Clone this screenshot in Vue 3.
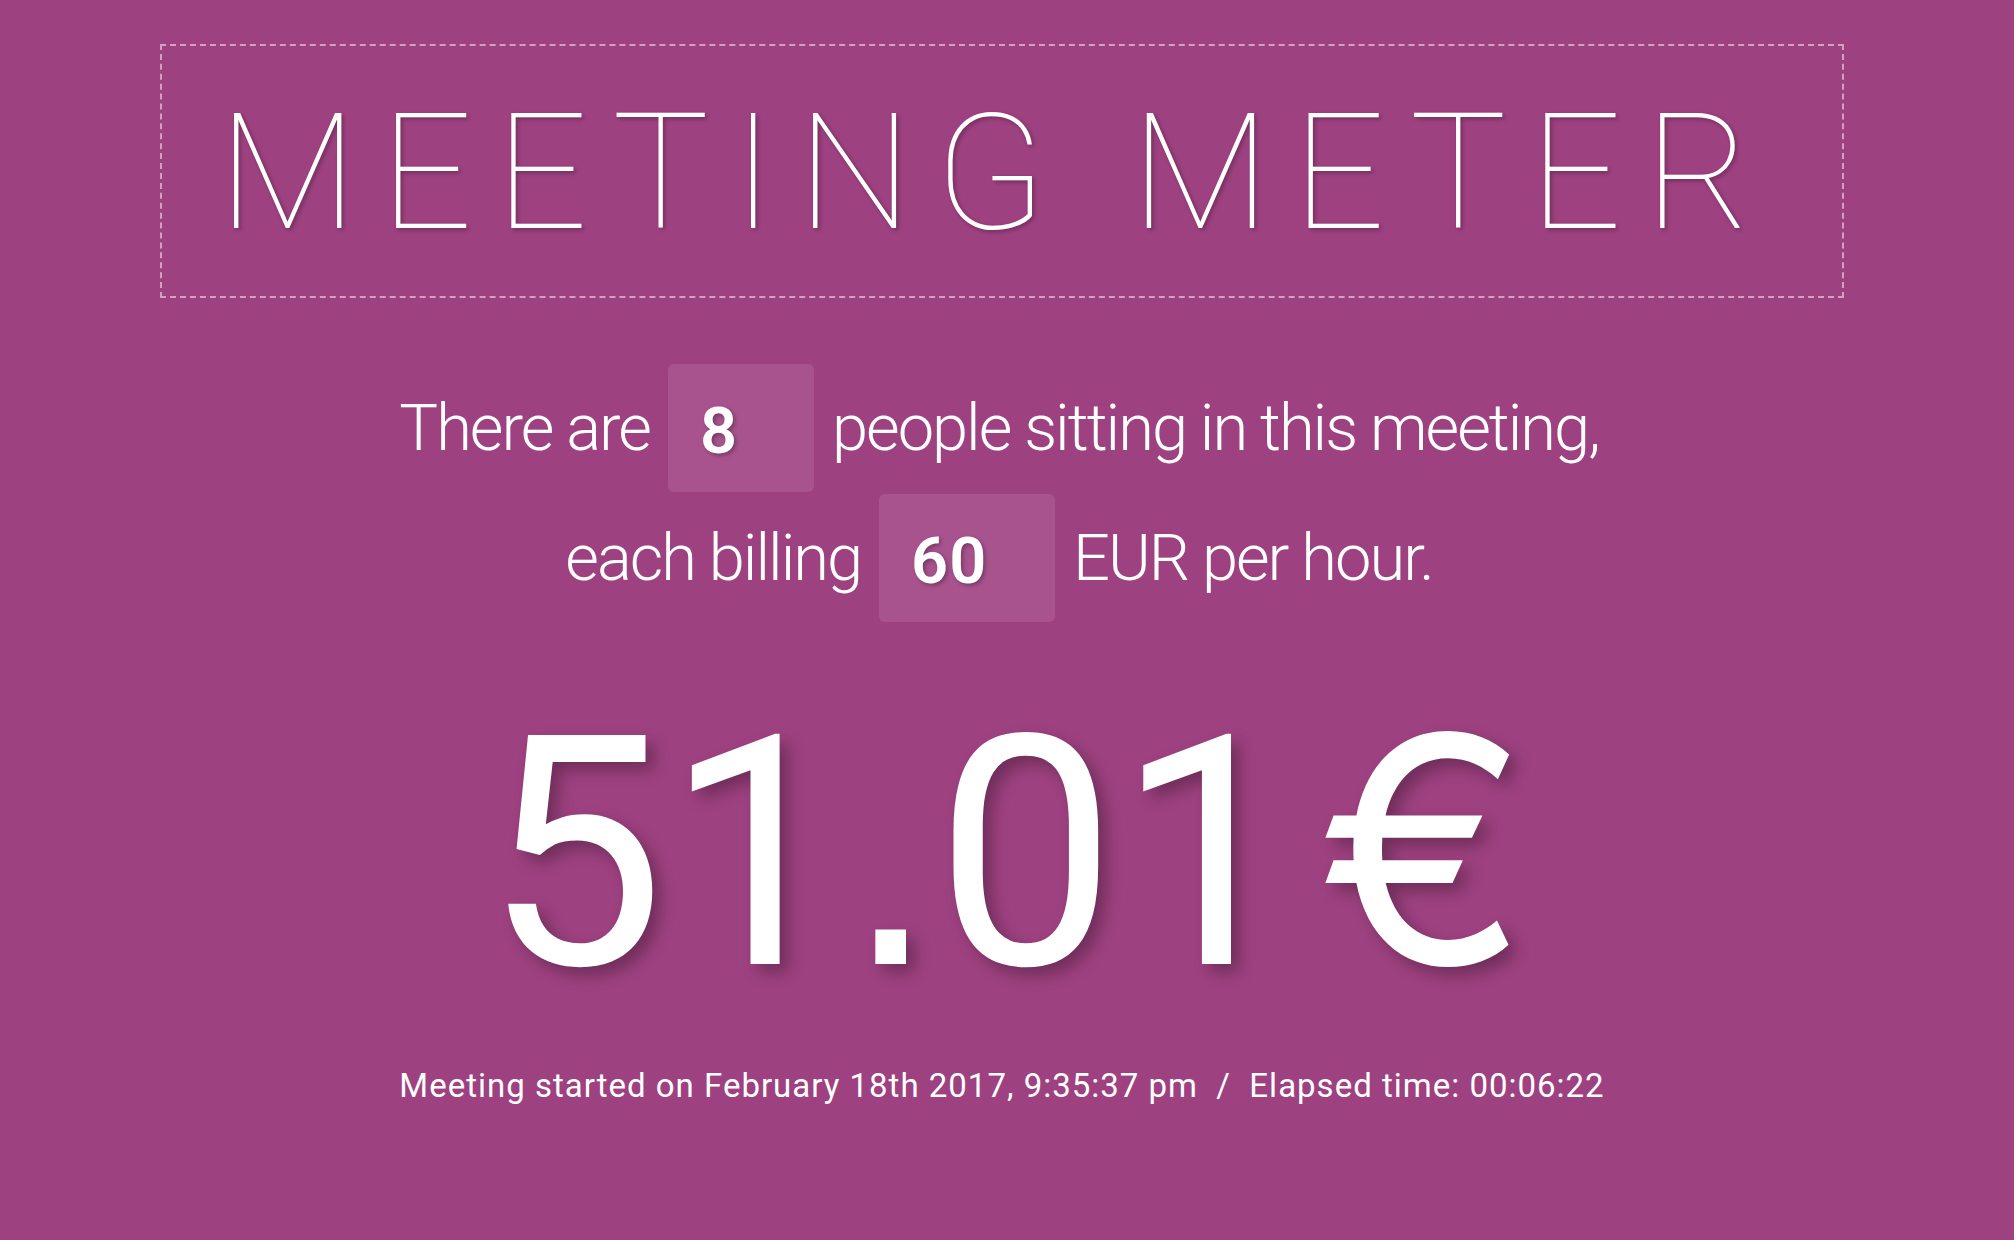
<script setup>
import { ref } from 'vue'

const people = ref('8')
const rate = ref('60')
</script>

<template>
  <main class="page">
    <header class="banner"><h1>MEETING METER</h1></header>
    <form class="setup" @submit.prevent>
      <p><label for="people">There are</label> <input id="people" v-model="people" class="people" inputmode="numeric"> people sitting in this meeting,</p>
      <p><label for="rate">each billing</label> <input id="rate" v-model="rate" class="rate" inputmode="numeric"> EUR per hour.</p>
    </form>
    <p class="total">51<span class="point">.</span>01<span class="currency">€</span></p>
    <p class="status">Meeting started on February 18th 2017, 9:35:37 pm&nbsp; /&nbsp; Elapsed time: 00:06:22</p>
  </main>
</template>

<style>
body {
  background: #9e4180;
}
</style>

<style scoped>
.page {
  box-sizing: border-box;
  min-height: 100vh;
  padding: 44px 170px 0 160px;
  background: #9e4180;
  color: #fff;
  font-family: Roboto, "Liberation Sans", sans-serif;
  text-align: center;
}

h1,
p {
  margin: 0;
  white-space: nowrap;
}

.banner {
  padding: 4px 12px 0 0;
  border: 2px dashed #d1a0c2;
}

h1 {
  font-size: 162px;
  font-weight: 100;
  line-height: 246px;
  letter-spacing: 23px;
  text-shadow: 2px 2px 4px rgba(0, 0, 0, 0.3);
}

.setup {
  margin-top: 65px;
  padding-right: 6px;
  font-size: 65px;
  font-weight: 300;
  line-height: 130px;
  letter-spacing: -2px;
}

.setup p {
  display: flex;
  align-items: center;
  justify-content: center;
  gap: 18px;
  height: 130px;
}

input {
  box-sizing: border-box;
  height: 128px;
  padding: 6px 32px 0;
  border: 0;
  border-radius: 6px;
  background: #a8538d;
  color: #fff;
  font: inherit;
  font-weight: 600;
  letter-spacing: 1px;
  text-shadow: 2px 2px 4px rgba(0, 0, 0, 0.3);
}

.people {
  width: 146px;
}

.rate {
  width: 176px;
}

.total {
  margin-top: 31px;
  padding-left: 8px;
  font-size: 322px;
  line-height: 400px;
  text-shadow: 8px 8px 16px rgba(0, 0, 0, 0.3);
}

.point {
  font-family: "Liberation Sans", sans-serif;
  line-height: 0;
}

.currency {
  margin-left: 20px;
  font-family: Inter, sans-serif;
  font-size: 316px;
  line-height: 0;
}

.status {
  margin-top: 8px;
  font-size: 33px;
  font-weight: 400;
  line-height: 48px;
  letter-spacing: 1px;
}
</style>
